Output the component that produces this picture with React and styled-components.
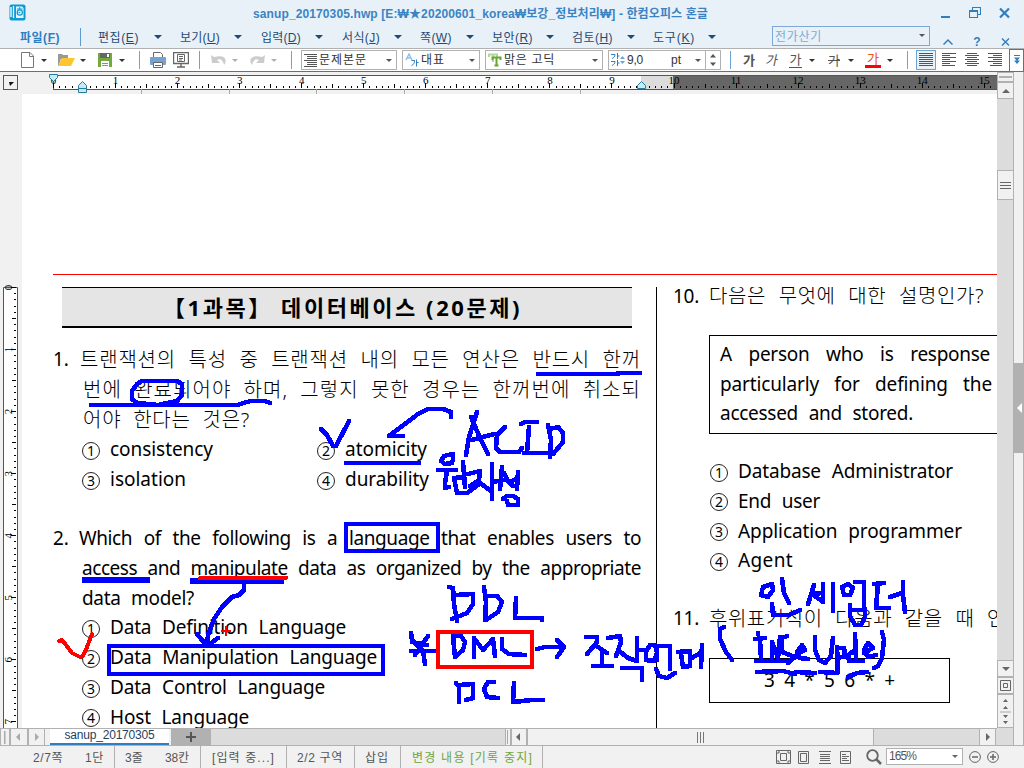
import React, { useLayoutEffect, useRef, useState } from 'react';
import styled, { createGlobalStyle, css } from 'styled-components';

const UI = `"Liberation Sans", "Noto Sans CJK KR", sans-serif`;
const DOC = `"Noto Sans", "Noto Sans CJK KR", sans-serif`;

const Global = createGlobalStyle`
  * { box-sizing: border-box; }
  body { margin: 0; background: #f1f1f1; overflow: hidden; }
  svg { display: block; flex: none; }
`;

const Window = styled.div`
  position: relative;
  width: 1024px;
  height: 768px;
  display: flex;
  flex-direction: column;
  overflow: hidden;
  background: #f1f1f1;
  font-family: ${UI};
  font-size: 12px;
  color: #444;
`;

/* ---------- text fitted to a measured width ---------- */
const FitBox = styled.span`
  display: block;
  flex: none;
  white-space: pre;
  width: ${(p) => p.$w}px;
  margin-left: ${(p) => p.$ml || 0}px;
  word-spacing: ${(p) => p.$ws || 0}px;
`;
const FitInner = styled.span`
  display: inline-block;
`;
function Fit({ w, ml, ws, children }) {
  const ref = useRef(null);
  const [spacing, setSpacing] = useState(0);
  useLayoutEffect(() => {
    const el = ref.current;
    const n = el.textContent.length;
    setSpacing((w - el.getBoundingClientRect().width) / Math.max(1, n));
  }, []);
  return (
    <FitBox $w={w} $ml={ml} $ws={ws}>
      <FitInner ref={ref} style={{ letterSpacing: spacing }}>{children}</FitInner>
    </FitBox>
  );
}

/* ---------- title + menu ---------- */
const Head = styled.header`
  height: 49px;
  flex: none;
  display: flex;
  flex-direction: column;
  background: #e9f1f8;
  border-bottom: 1px solid #b1b1b1;
`;
const TitleBar = styled.div`
  height: 25px;
  display: flex;
  align-items: center;
  padding-left: 9px;
  color: #3a84c4;
  font-weight: bold;
`;
const WindowButtons = styled.div`
  display: flex;
  margin-left: auto;
  margin-right: 14px;
  gap: 18px;
`;
const MenuRow = styled.nav`
  height: 23px;
  display: flex;
  align-items: center;
  padding-left: 20px;
  color: #1f4b73;
`;
const FileMenu = styled.div`
  width: 61px;
  height: 18px;
  display: flex;
  align-items: center;
  font-weight: bold;
  color: #2f7ebf;
  border-right: 1px solid #5f9bd0;
`;
const MenuItem = styled.div`
  width: ${(p) => p.$w}px;
  display: flex;
  align-items: center;
  justify-content: space-between;
`;
const Caret = styled.i`
  display: block;
  flex: none;
  width: 0;
  height: 0;
  border: ${(p) => p.$s || 3}px solid transparent;
  border-top: ${(p) => p.$s || 3}px solid ${(p) => p.$c || '#333'};
  border-bottom: 0;
  margin-left: ${(p) => p.$ml || 0}px;
`;
const SearchBox = styled.div`
  width: 158px;
  height: 20px;
  margin: -2px 15px 0 56px;
  padding: 0 4px 0 2px;
  display: flex;
  align-items: center;
  justify-content: space-between;
  border: 1px solid #7ea9d6;
  color: #7ea9d6;
`;
const SmallButtons = styled.div`
  display: flex;
  gap: 19px;
  align-items: center;
  margin-left: -2px;
  padding-top: 11px;
`;

const menus = [
  ['편집', 'E', 41, 64, 18], ['보기', 'U', 40, 62, 19], ['입력', 'D', 40, 62, 19], ['서식', 'J', 38, 60, 18],
  ['쪽', 'W', 32, 54, 18], ['보안', 'R', 41, 62, 18], ['검토', 'H', 41, 63, 18], ['도구', 'K', 42, 63, 0],
];
const MenuCell = styled(MenuItem)`
  margin-right: ${(p) => p.$gap}px;
`;
const FirstMenu = styled.div`
  display: flex;
  margin-left: 17px;
`;
const QMark = styled.b`
  width: 10px;
  height: 8px;
  line-height: 9px;
  text-align: center;
  font-size: 12px;
  color: #2f7ebf;
`;

function TopBar() {
  return (
    <Head>
      <TitleBar>
        <svg width="17" height="17" viewBox="0 0 17 17">
          <rect x=".5" y=".5" width="16" height="16" rx="2" fill="#0b9bd3" />
          <path d="M2 3v10M4.500 2v12" stroke="#fff" strokeWidth="1.3" />
          <path d="M7 2.500h6l1.500 1.500v10H7z" fill="#e6f6fc" />
          <circle cx="10.800" cy="8.500" r="2.600" fill="none" stroke="#0b9bd3" strokeWidth="1.200" />
          <path d="M8 5h5.500M10.700 3.200V5M9.500 8.800l1.800-.6" stroke="#0b9bd3" strokeWidth="1.200" />
        </svg>
        <Fit w={455} ml={227}>sanup_20170305.hwp [E:₩★20200601_korea₩보강_정보처리₩] - 한컴오피스 혼글</Fit>
        <WindowButtons>
          <svg width="11" height="12"><path d="M1 10h9" stroke="#2f7ebf" strokeWidth="2" /></svg>
          <svg width="12" height="12"><path d="M3.500 3V.5h8v7H9M.5 3.500h8v7h-8zM.5 4.500h8" fill="none" stroke="#2f7ebf" strokeWidth="1.100" /></svg>
          <svg width="11" height="12"><path d="M1 1.500l9 9M10 1.500l-9 9" stroke="#2f7ebf" strokeWidth="2.200" /></svg>
        </WindowButtons>
      </TitleBar>
      <MenuRow>
        <FileMenu><Fit w={40}>파일(<u>F</u>)</Fit></FileMenu>
        <FirstMenu>
          {menus.map(([t, k, w, total, gap]) => (
            <MenuCell key={t} $w={total} $gap={gap}>
              <Fit w={w}>{t}(<u>{k}</u>)</Fit>
              <Caret $s={4} $c="#1f4b73" />
            </MenuCell>
          ))}
        </FirstMenu>
        <SearchBox><Fit w={47}>전가산기</Fit><Caret $c="#555" /></SearchBox>
        <SmallButtons>
          <svg width="10" height="8"><path d="M.5 6.500L5 2l4.500 4.500" fill="none" stroke="#2f7ebf" strokeWidth="1.500" /></svg>
          <QMark>?</QMark>
          <svg width="9" height="8"><path d="M1 .5l7 7M8 .5l-7 7" stroke="#2f7ebf" strokeWidth="1.400" /></svg>
        </SmallButtons>
      </MenuRow>
    </Head>
  );
}

/* ---------- toolbar ---------- */
const Toolbar = styled.div`
  height: 23px;
  flex: none;
  display: flex;
  align-items: center;
  background: #fff;
  border-bottom: 1px solid #2f7ebf;
  color: #333;
`;
const Slot = styled.div`
  width: ${(p) => p.$w}px;
  flex: none;
  display: flex;
  align-items: center;
`;
const Rule = styled.i`
  width: 1px;
  height: 18px;
  flex: none;
  background: #6ba3d3;
`;
const Combo = styled.div`
  width: ${(p) => p.$w}px;
  height: 20px;
  flex: none;
  margin-left: ${(p) => p.$ml || 0}px;
  display: flex;
  align-items: center;
  gap: 2px;
  padding: 0 4px 0 2px;
  border: 1px solid #b1b1b1;
  line-height: 16px;
  & > ${Caret} { margin-left: auto; }
`;
const Spinner = styled.div`
  width: 15px;
  height: 20px;
  flex: none;
  display: flex;
  align-items: center;
  justify-content: center;
  border: 1px solid #b1b1b1;
  border-left: 0;
`;
const Glyph = styled.span`
  width: ${(p) => p.$w}px;
  flex: none;
  text-align: center;
  font-size: 13px;
  line-height: 15px;
  color: ${(p) => p.$c || '#555'};
  ${(p) => p.$bold && css`font-weight: bold;`}
  ${(p) => p.$italic && css`display: inline-block; transform: skewX(-12deg);`}
  ${(p) => p.$under && css`border-bottom: 1px solid #555;`}
  ${(p) => p.$strike && css`text-decoration: line-through;`}
  ${(p) => p.$red && css`line-height: 13px; border-bottom: 3px solid #f00;`}
`;
const AlignButton = styled.div`
  width: 20px;
  height: 20px;
  flex: none;
  margin-right: 3px;
  display: flex;
  align-items: center;
  justify-content: center;
  border: 1px solid ${(p) => (p.$on ? '#6ba3d3' : 'transparent')};
  background: ${(p) => (p.$on ? '#e9f1f8' : 'transparent')};
`;
const MoreButton = styled.div`
  width: 15px;
  height: 23px;
  flex: none;
  margin-left: auto;
  display: flex;
  align-items: center;
  justify-content: center;
  border: 1px solid #2f7ebf;
`;

function AlignIcon({ d }) {
  return <svg width="14" height="14"><path d={d} stroke="#555" fill="none" shapeRendering="crispEdges" /></svg>;
}
const rowsOf = (a) => a.map(([x, w], i) => `M${x} ${0.5 + i * 2}h${w}`).join('');
const J = rowsOf([[0, 14], [0, 14], [0, 14], [0, 14], [0, 14], [0, 14], [0, 14]]);
const L = rowsOf([[0, 14], [0, 8], [0, 14], [0, 8], [0, 14], [0, 8], [0, 13]]);
const C = rowsOf([[2, 10], [0, 14], [2, 10], [0, 14], [2, 10], [0, 14], [2, 10]]);
const R = rowsOf([[0, 14], [5, 9], [0, 14], [5, 9], [0, 14], [5, 9], [2, 12]]);

function Tools() {
  return (
    <Toolbar>
      <IconGroup />
      <Rule />
      <Slot $w={9} />
      <Combo $w={96}>
        <svg width="13" height="14"><path d="M0 1.500h13M3 3.500h10M3 5.500h10M0 7.500h13M3 9.500h10M3 11.500h10M0 13.500h13" stroke="#555" shapeRendering="crispEdges" /></svg>
        <Fit w={48}>문제본문</Fit><Caret $c="#555" />
      </Combo>
      <Combo $w={78} $ml={5}>
        <svg width="14" height="14"><path d="M1 7l3-6 3 6M2 5h4" fill="none" stroke="#8fc0e6" strokeWidth="1.400" /><path d="M6.500 7.500h3c0 3-1 4-3 5M11.500 6.500v7M11.500 9.500h2" fill="none" stroke="#2f7ebf" /></svg>
        <Fit w={24}>대표</Fit><Caret $c="#555" />
      </Combo>
      <Combo $w={118} $ml={5}>
        <svg width="14" height="14"><path d="M1 4V1.500h8V4M5 2v7" fill="none" stroke="#b5d69b" strokeWidth="2" /><path d="M4.500 7V4.500h8V7M8.500 5v8M6.500 12.500h4" fill="none" stroke="#6aa533" strokeWidth="2" /></svg>
        <Fit w={51}>맑은 고딕</Fit><Caret $c="#555" />
      </Combo>
      <Combo $w={98} $ml={5}>
        <svg width="14" height="14"><path d="M0 1.500h4c0 2-1 3-3 4M6.500 0v6M6.500 3h2M0 8.500h4c0 2-1 3-3 4M6.500 7v6M6.500 10h2" fill="none" stroke="#2f7ebf" /><path d="M9 6l2.500-3L14 6zM9 8l2.500 3L14 8z" fill="#6ba3d3" /></svg>
        <Fit w={16}>9,0</Fit><Fit w={10} ml={26}>pt</Fit><Caret $c="#555" />
      </Combo>
      <Spinner><svg width="6" height="14"><path d="M0 4.500L3 1l3 3.500zM0 9.500L3 13l3-3.500z" fill="#555" /></svg></Spinner>
      <Slot $w={9} />
      <Rule />
      <Slot $w={11} />
      <Slot $w={23}><Glyph $w={14} $bold>가</Glyph></Slot>
      <Slot $w={24}><Glyph $w={14} $italic>가</Glyph></Slot>
      <Slot $w={38}><Glyph $w={13} $under>가</Glyph><Caret $ml={7} /></Slot>
      <Slot $w={38}><Glyph $w={14} $strike>가</Glyph><Caret $ml={7} /></Slot>
      <Slot $w={42}><Glyph $w={16} $red $c="#e8501f">가</Glyph><Caret $ml={6} /></Slot>
      <Rule />
      <Slot $w={8} />
      <AlignButton $on><AlignIcon d={J} /></AlignButton>
      <AlignButton><AlignIcon d={L} /></AlignButton>
      <AlignButton><AlignIcon d={C} /></AlignButton>
      <AlignButton><AlignIcon d={R} /></AlignButton>
      <MoreButton><svg width="6" height="10"><path d="M0 5.500L3 9l3-3.500zM0 2.500L3 6l3-3.500z" fill="#2f7ebf" /><path d="M0 .5h6" stroke="#2f7ebf" /></svg></MoreButton>
    </Toolbar>
  );
}
const IconStrip = styled.div`
  display: flex;
  align-items: center;
  width: 270px;
  margin-left: 21px;
  flex: none;
`;
function IconGroup() {
  return (
    <IconStrip>
      <Slot $w={37}>
        <svg width="13" height="16"><path d="M.5.5H9l3.500 3.500v11.500H.5zM8.500.5v4h4" fill="#fff" stroke="#777" /></svg>
        <Caret $ml={7} />
      </Slot>
      <Slot $w={40}>
        <svg width="17" height="14"><path d="M0 1h4l1 1h5v4H3l-2.500 7H0z" fill="#999" /><path d="M4 5h13l-4 8H0z" fill="#fdc52f" /></svg>
        <Caret $ml={5} />
      </Slot>
      <Slot $w={41}>
        <svg width="14" height="14"><path d="M0 0h14v14H0z" fill="#74a940" /><path d="M2 0h10v5H2z" fill="#666" /><path d="M9 1h2v3H9zM3 8h8v6H3z" fill="#fff" /><path d="M4 10.500h6M4 12.500h6" stroke="#74a940" /></svg>
        <Caret $ml={7} />
      </Slot>
      <Rule />
      <Slot $w={10} />
      <Slot $w={23}>
        <svg width="16" height="16"><path d="M3.500 5V.5h7l2 2V5" fill="#fff" stroke="#666" /><rect y="5" width="16" height="8" rx="1" fill="#77a1cf" /><path d="M3.500 10.500h9v5h-9zM5 13.500h6" fill="#fff" stroke="#666" /></svg>
      </Slot>
      <Slot $w={26}>
        <svg width="16" height="16"><path d="M.5.500h15v11H.5zM4 15h8M8 12v3" fill="none" stroke="#666" strokeWidth="1.400" /><path d="M4.500 2.500h7v7h-7zM6 4.500h4M6 6.500h4M6 8h3" fill="#fff" stroke="#666" /></svg>
      </Slot>
      <Rule />
      <Slot $w={11} />
      <Slot $w={38}>
        <svg width="16" height="12"><path d="M0 1l1 8h8L6 6c4-2 6 1 7 5 4-5 1-11-10-8z" fill="#ccc" /></svg>
        <Caret $c="#b0b0b0" $ml={5} />
      </Slot>
      <Slot $w={41}>
        <svg width="16" height="12"><path d="M16 1l-1 8H7l3-3C6 4 4 7 3 11-1 6 2 0 13 3z" fill="#ccc" /></svg>
        <Caret $c="#b0b0b0" $ml={6} />
      </Slot>
    </IconStrip>
  );
}

/* ---------- rulers ---------- */
const RulerRow = styled.div`
  height: 22px;
  flex: none;
  display: flex;
`;
const UNIT = 62.05;
function TopRuler() {
  const ticks = [];
  for (let i = 0; i <= 151; i++) {
    const x = Math.round(53 + i * UNIT / 10) + 0.5;
    ticks.push(`M${x} ${i % 10 === 0 ? 11 : i % 5 === 0 ? 12 : 14}V16`);
  }
  return (
    <svg width="997" height="22">
      <path d="M53 3h588v14H53z" fill="#fff" />
      <path d="M641 3h32v14h-32z" fill="#dcdcdc" />
      <path d="M673 3h324v15H673z" fill="#666" />
      <path d="M53 3.500h944M53 17.500h944M53.500 3v15" stroke="#555" fill="none" />
      <path d={ticks.join('')} stroke="#000" shapeRendering="crispEdges" />
      <path d="M141.500 17v5M229.500 17v5M316.500 17v5M404.500 17v5M492.500 17v5M580.500 17v5" stroke="#aaa" />
      <g fontFamily="Liberation Serif, serif" fontSize="11" textAnchor="middle">
        {Array.from({ length: 16 }, (_, i) => <text key={i} x={53.5 + i * UNIT} y="12">{i}</text>)}
      </g>
      <g stroke="#2b7a9c" fill="#c2edf8">
        <path d="M49.500 2.500h8v3l-4 4-4-4z" />
        <path d="M82.500 9.500l4 4v7h-8v-7zM78.500 16.500h8" />
        <path d="M641.500 9.500l4 4v3h-8v-3z" />
      </g>
      <rect x="3.500" y="3.500" width="14" height="14" fill="#f1f1f1" stroke="#555" />
      <path d="M9 10h5l-4 4z" fill="#111" />
    </svg>
  );
}
function SideRuler() {
  const ticks = [];
  for (let i = 0; i <= 71; i++) {
    const y = Math.round(193 + i * UNIT / 10) + 0.5;
    ticks.push(`M${i % 10 === 0 ? 11 : i % 5 === 0 ? 12 : 14} ${y}H16`);
  }
  return (
    <svg width="22" height="634">
      <path d="M4 193h13v441H4z" fill="#fff" />
      <path d="M3.500 634V193.500h14V634" fill="none" stroke="#555" />
      <path d={ticks.join('')} stroke="#000" shapeRendering="crispEdges" />
      <g fontFamily="Liberation Serif, serif" fontSize="11" textAnchor="middle">
        {Array.from({ length: 8 }, (_, i) => (
          <text key={i} transform={`translate(12 ${193.5 + i * UNIT}) rotate(-90)`}>{i}</text>
        ))}
      </g>
    </svg>
  );
}

/* ---------- document ---------- */
const Body = styled.div`
  flex: 1;
  display: flex;
  min-height: 0;
`;
const Editor = styled.div`
  width: 997px;
  flex: none;
  display: flex;
  flex-direction: column;
`;
const Work = styled.div`
  height: 634px;
  flex: none;
  display: flex;
`;
const Page = styled.main`
  width: 975px;
  padding: 180px 0 0 31px;
  background: #fff;
  overflow: hidden;
  color: #000;
  font-family: ${DOC};
  font-size: 19px;
`;
const Columns = styled.div`
  display: flex;
  height: 454px;
  padding-top: 12px;
  border-top: 1px solid #f00;
`;
const LeftColumn = styled.section`
  width: 604px;
  flex: none;
  border-right: 1px solid #000;
`;
const RightColumn = styled.section`
  width: 340px;
  flex: none;
  overflow: hidden;
  padding-left: 16px;
`;
const SubjectBar = styled.h1`
  width: 570px;
  height: 41px;
  margin: 0 0 17px 9px;
  display: flex;
  align-items: center;
  padding-bottom: 3px;
  background: #e5e5e5;
  border-top: 1px solid #000;
  border-bottom: 2px solid #000;
  font-size: 22px;
`;
const Line = styled.div`
  height: ${(p) => p.$h || 29.83}px;
  line-height: ${(p) => p.$h || 29.83}px;
  display: flex;
  padding-left: ${(p) => p.$in || 0}px;
  padding-top: ${(p) => p.$drop || 0}px;
  font-size: ${(p) => (p.$ko ? 20 : 19)}px;
  font-weight: ${(p) => (p.$ko ? 300 : 400)};
  color: #000;
`;
const Num = styled.span`
  width: ${(p) => p.$w}px;
  flex: none;
  font-size: 19px;
  font-weight: 400;
`;
const Circle = styled.span`
  width: 18px;
  height: 18px;
  flex: none;
  margin: 6.500px 10px 0 0;
  border: 1px solid #222;
  border-radius: 50%;
  font-size: 14px;
  line-height: 16px;
  text-align: center;
`;
const Choice = styled.div`
  width: ${(p) => p.$w || 'auto'};
  display: flex;
`;
const Frame = styled.div`
  width: ${(p) => p.$w}px;
  height: ${(p) => p.$h}px;
  margin: ${(p) => p.$m};
  padding: ${(p) => p.$p};
  border: 1px solid #000;
`;
const Blank = styled.div`
  height: ${(p) => p.$h}px;
`;

function Option({ n, w, col, children }) {
  return <Choice $w={col}><Circle>{n}</Circle><Fit w={w} ws={6}>{children}</Fit></Choice>;
}

function DocumentPage() {
  return (
    <Page>
      <Columns>
        <LeftColumn>
          <SubjectBar><Fit w={359} ml={101} ws={0}>【1과목】 데이터베이스 (20문제)</Fit></SubjectBar>
          <Line $ko><Num $w={27}>1.</Num><Fit w={561} ws={6.5}>트랜잭션의 특성 중 트랜잭션 내의 모든 연산은 반드시 한꺼</Fit></Line>
          <Line $ko $in={30}><Fit w={558} ws={6}>번에 완료되어야 하며, 그렇지 못한 경우는 한꺼번에 취소되</Fit></Line>
          <Line $ko $in={30}><Fit w={167} ws={6}>어야 한다는 것은?</Fit></Line>
          <Line $in={29} $drop={1}><Option n="1" w={103} col="235px">consistency</Option><Option n="2" w={82}>atomicity</Option></Line>
          <Line $in={29} $drop={1}><Option n="3" w={76} col="235px">isolation</Option><Option n="4" w={84}>durability</Option></Line>
          <Blank $h={29.83} />
          <Line><Num $w={26}>2.</Num><Fit w={562} ws={7}>Which of the following is a language that enables users to</Fit></Line>
          <Line $in={29}><Fit w={559} ws={5.8}>access and manipulate data as organized by the appropriate</Fit></Line>
          <Line $in={29}><Fit w={112} ws={5.8}>data model?</Fit></Line>
          <Line $in={29}><Option n="1" w={236}>Data Definition Language</Option></Line>
          <Line $in={29}><Option n="2" w={267}>Data Manipulation Language</Option></Line>
          <Line $in={29}><Option n="3" w={215}>Data Control Language</Option></Line>
          <Line $in={29}><Option n="4" w={139}>Host Language</Option></Line>
        </LeftColumn>
        <RightColumn>
          <Line $ko $h={18}><Num $w={36}><Fit w={26}>10.</Fit></Num><Fit w={275} ws={7}>다음은 무엇에 대한 설명인가?</Fit></Line>
          <Frame $w={310} $h={99} $m="30px 0 23px 36px" $p="4px 0 0 10px">
            <Line $h={29.6}><Fit w={270} ws={12}>A person who is response</Fit></Line>
            <Line $h={29.6}><Fit w={272} ws={10.500}>particularly for defining the</Fit></Line>
            <Line $h={29.6}><Fit w={193} ws={6}>accessed and stored.</Fit></Line>
          </Frame>
          <Line $in={37}><Option n="1" w={215}>Database Administrator</Option></Line>
          <Line $in={37}><Option n="2" w={82}>End user</Option></Line>
          <Line $in={37}><Option n="3" w={224}>Application programmer</Option></Line>
          <Line $in={37}><Option n="4" w={55}>Agent</Option></Line>
          <Blank $h={28} />
          <Line $ko><Num $w={36}><Fit w={26}>11.</Fit></Num><Fit w={297} ws={7}>후위표기식이 다음과 같을 때 연</Fit></Line>
          <Frame $w={241} $h={45} $m="24px 0 0 36px" $p="7px 0 0 54px">
            <Line><Fit w={131} ws={4.500}>3 4 * 5 6 * +</Fit></Line>
          </Frame>
        </RightColumn>
      </Columns>
    </Page>
  );
}

/* ---------- bottom tabs and horizontal scroll ---------- */
const TabRow = styled.div`
  height: 18px;
  flex: none;
  display: flex;
  background: #dcdcdc;
  border-top: 1px solid #b1b1b1;
  border-bottom: 1px solid #b1b1b1;
`;
const Box = styled.div`
  width: ${(p) => p.$w}px;
  height: ${(p) => (p.$h ? p.$h + 'px' : 'auto')};
  flex: none;
  margin-left: ${(p) => p.$ml || 0}px;
  display: flex;
  align-items: center;
  justify-content: center;
  background: ${(p) => p.$bg || '#f1f1f1'};
  border: solid #b1b1b1;
  border-width: ${(p) => p.$b || '0 1px'};
`;
const FileTab = styled.div`
  width: 119px;
  flex: none;
  display: flex;
  justify-content: center;
  line-height: 12px;
  background: #fff;
  border-bottom: 2px solid #2f7ebf;
  color: #1f3f60;
`;

function Tri({ d, c = '#666' }) {
  const paths = { left: 'M5 0v8L1 4z', right: 'M2 0v8l4-4z', up: 'M0 6h8L4 2z', down: 'M0 2h8L4 6z' };
  return <svg width="8" height="8"><path d={paths[d]} fill={c} /></svg>;
}

function Tabs() {
  return (
    <TabRow>
      <Box $w={10}><svg width="3" height="13"><path d="M.500 0v13" stroke="#aaa" strokeWidth="2" /></svg></Box>
      <Box $w={18}><Tri d="left" c="#aaa" /></Box>
      <Box $w={17}><Tri d="right" c="#aaa" /></Box>
      <Box $w={5} $b="0" />
      <FileTab><Fit w={90}>sanup_20170305</Fit></FileTab>
      <Box $w={2} $b="0" />
      <Box $w={40} $b="0" $bg="#b1b1b1"><svg width="10" height="10"><path d="M5 0v10M0 5h10" stroke="#555" strokeWidth="2" /></svg></Box>
      <Box $w={6} $ml={294}><svg width="2" height="14"><path d="M.500 0v14" stroke="#aaa" /></svg></Box>
      <Box $w={16}><Tri d="left" /></Box>
      <Box $w={347}><svg width="8" height="11"><path d="M.500 0v11M3.500 0v11M6.500 0v11" stroke="#777" /></svg></Box>
      <Box $w={17} $ml={105}><Tri d="right" /></Box>
    </TabRow>
  );
}

/* ---------- vertical scroll ---------- */
const ScrollColumn = styled.div`
  width: 17px;
  flex: none;
  display: flex;
  flex-direction: column;
  background: #dcdcdc;
  border-right: 1px solid #b1b1b1;
  border-bottom: 1px solid #b1b1b1;
`;
const ScrollGap = styled.div`
  height: ${(p) => p.$h}px;
  flex: none;
`;
const Dock = styled.div`
  width: 10px;
  flex: none;
  padding-top: 291px;
  border-right: 1px solid #b1b1b1;
  border-bottom: 1px solid #b1b1b1;
`;
const DockHandle = styled.div`
  height: 90px;
  display: flex;
  align-items: center;
  justify-content: flex-end;
  background: #b1b1b1;
`;

function VScroll() {
  return (
    <ScrollColumn>
      <Box $w={17} $h={10} $b="1px"><svg width="13" height="2"><path d="M0 1h13" stroke="#b1b1b1" strokeWidth="2" /></svg></Box>
      <Box $w={17} $h={17} $b="1px"><Tri d="up" /></Box>
      <ScrollGap $h={71} />
      <Box $w={17} $h={30} $b="1px"><svg width="11" height="8"><path d="M0 1.500h11M0 4.500h11M0 7.500h11" stroke="#666" /></svg></Box>
      <ScrollGap $h={460} />
      <Box $w={17} $h={17} $b="1px"><Tri d="down" /></Box>
      <Box $w={17} $h={17} $b="1px"><svg width="11" height="11"><path d="M.500.500h10v10H.500zM3.500 3.500h4v4h-4z" fill="none" stroke="#666" /></svg></Box>
      <Box $w={17} $h={34} $b="1px"><svg width="11" height="30"><path d="M3 6l2.500-3L8 6zM3 13l2.500-3L8 13zM3 19l2.500 3L8 19zM3 25l2.500 3L8 25z" fill="#666" /><path d="M0 16h11" stroke="#aaa" /></svg></Box>
    </ScrollColumn>
  );
}

/* ---------- status ---------- */
const Status = styled.footer`
  height: 22px;
  flex: none;
  display: flex;
  align-items: center;
  background: #f1f1f1;
  color: #555;
`;
const Cell = styled.div`
  width: ${(p) => p.$w}px;
  height: 22px;
  flex: none;
  display: flex;
  align-items: center;
  padding-left: ${(p) => p.$pl}px;
  padding-bottom: 2px;
  border-right: 1px solid #b1b1b1;
  color: ${(p) => p.$c || 'inherit'};
`;
const ViewIcons = styled.div`
  margin-left: 233px;
  display: flex;
  align-items: center;
  width: 110px;
  flex: none;
`;
const Zoom = styled.div`
  width: 77px;
  height: 17px;
  margin-top: -2px;
  flex: none;
  display: flex;
  align-items: center;
  justify-content: space-between;
  padding: 0 4px 0 2px;
  background: #fff;
  border: 1px solid #b1b1b1;
`;
const ZoomValue = styled.div`
  display: flex;
  line-height: 14px;
`;
const ZoomButtons = styled.div`
  display: flex;
  gap: 6px;
  margin-left: 6px;
`;

function StatusBar() {
  return (
    <Status>
      <Cell $w={115} $pl={33}><Fit w={30}>2/7쪽</Fit><Fit w={19} ml={22}>1단</Fit></Cell>
      <Cell $w={86} $pl={10}><Fit w={18}>3줄</Fit><Fit w={24} ml={22}>38칸</Fit></Cell>
      <Cell $w={86} $pl={11}><Fit w={63}>[입력 중...]</Fit></Cell>
      <Cell $w={68} $pl={10}><Fit w={46}>2/2 구역</Fit></Cell>
      <Cell $w={46} $pl={10}><Fit w={24}>삽입</Fit></Cell>
      <Cell $w={142} $pl={11} $c="#6fa53c"><Fit w={121}>변경 내용 [기록 중지]</Fit></Cell>
      <ViewIcons>
        <Slot $w={22}><svg width="15" height="14"><path d="M.500.500h14v13H.500zM4.500 3.500h6v7h-6z" fill="none" stroke="#666" /><path d="M2 4V2h2M11 2h2v2M13 10v2h-2M4 12H2v-2" fill="none" stroke="#666" /></svg></Slot>
        <Slot $w={21}><svg width="11" height="13"><path d="M.500.500h10v12H.500zM2.500 2.500h6v8h-6z" fill="none" stroke="#666" /></svg></Slot>
        <Slot $w={21}><svg width="12" height="13"><path d="M0 .500h12M1 3.500h10M1 5.500h10M1 7.500h10M1 9.500h10M0 12.500h12" stroke="#666" /></svg></Slot>
        <Slot $w={26}><svg width="11" height="13"><path d="M.500.500h10v12H.500zM2 3.500h4M2 5.500h7M2 7.500h5M2 9.500h7" fill="none" stroke="#666" /></svg></Slot>
        <Slot $w={20}><svg width="16" height="16"><circle cx="6.500" cy="6.500" r="5.300" fill="none" stroke="#666" strokeWidth="1.800" /><path d="M10.500 10.500l4.500 4.500" stroke="#666" strokeWidth="2.500" /></svg></Slot>
      </ViewIcons>
      <Zoom><ZoomValue><Fit w={27}>165%</Fit></ZoomValue><Caret $c="#666" /></Zoom>
      <ZoomButtons>
        <svg width="12" height="12"><circle cx="6" cy="6" r="5.400" fill="none" stroke="#666" /><path d="M3 6h6" stroke="#666" strokeWidth="1.500" /></svg>
        <svg width="12" height="12"><circle cx="6" cy="6" r="5.400" fill="none" stroke="#666" /><path d="M3 6h6M6 3v6" stroke="#666" strokeWidth="1.500" /></svg>
      </ZoomButtons>
    </Status>
  );
}

/* ---------- pen annotations drawn over the page ---------- */
const Ink = styled.svg`
  position: absolute;
  left: 0;
  top: 0;
  pointer-events: none;
`;
const strokes = [
  // question 1
  'M538 374H618V373H640', 'M91 405H238L243 403L251 401H265L270 403',
  'M142 381H177L182 384V395L177 401L158 405L137 403L132 399V391L137 384Z',
  'M321 429L327 435L333 446H336L349 421', 'M451 417V412L443 409H428L418 414L389 436H403',
  // ACID
  'M477 412L475 418L469 437L466 455', 'M471 417L480 438L488 454M472 440L494 434',
  'M505 427L497 435L496 448L500 452H519L522 448', 'M521 424L525 422H537M529 427L527 453M524 453H552',
  'M548 425L551 440L550 457M550 429L558 427L563 433V442L553 454',
  // 원자성
  'M452 454L444 456L441 461L445 464L452 463L453 459V454Z', 'M438 470H456M447 471L445 483V488L449 487',
  'M463 462L465 487M454 478L464 477M454 478L457 493H467L478 485', 'M468 474L480 471L479 480L470 486M480 483L491 491',
  'M492 464V499M492 482L504 480', 'M502 467L500 489M504 473L508 481L513 486', 'M518 472L517 489M510 482L518 478',
  'M503 499L507 496L513 496L518 499V505H508L507 501',
  // arrow to choice 2
  'M244 584V590L239 595L232 597L222 607L214 619L208 635L207 646M197 634L207 646L218 638',
  // DDL / DML / DCL
  'M449 587L453 588L454 604L457 621M455 595L473 594V604L467 613L452 619',
  'M484 587L486 602L485 620M486 596L497 596L502 602L498 612L486 620', 'M516 598L515 618H542V620',
  'M453 636L455 657M453 636H461L465 642L463 650L455 657', 'M474 657V638L483 650L493 639L495 656', 'M502 639V649L509 654L525 655',
  'M456 683L459 687V702M460 685L473 684V698L466 700', 'M494 682H488L484 689L487 697L498 698', 'M514 683L513 702L532 700H543',
  'M411 633L412 640L423 651L425 664M428 636L415 655M411 651H438M412 642L427 645',
  'M537 649L545 647H563M557 640L564 647L557 657',
  // 조작언어
  'M586 637H597L597 642L587 654M595 645L607 653', 'M602 653V665M593 666H612',
  'M608 638L620 636L621 642L616 656M618 650L628 658L637 661', 'M637 638V661M637 650H645', 'M622 668H642V680',
  'M650 645L646 652V660L654 661L657 653L655 645ZM657 646V660M657 646H670V669', 'M656 669L659 676L667 678L675 673',
  'M678 652L690 651V666L683 667L681 654M702 645L701 667M690 659L702 652',
  // 인세입터
  'M724 627L720 629V639L726 652L732 660', 'M772 584L763 587L761 595L768 597L773 590ZM782 579L784 593L789 603',
  'M772 604L773 615H789L800 610', 'M814 585L808 604M812 594L822 593M813 595L822 601M823 584V602M833 584V611',
  'M848 584L842 587L844 595H850L853 588ZM855 582H864V607', 'M850 605V616L855 625H861L865 617V609M850 610H864',
  'M874 584L884 583M878 584L876 608H889M903 582V595L905 612M890 597L902 593',
  // Inse Upde
  'M758 633V634M755 639L765 638M760 640L761 659M756 661H787', 'M772 660V642L778 658L780 637',
  'M787 636L782 638V652L795 657L788 663', 'M797 654L805 650L802 645L797 652L800 658L808 659',
  'M815 637V650L819 660L825 663L831 656L833 638', 'M837 647L838 672M838 648H844L845 656L838 658',
  'M855 634L856 660M855 650L848 655L849 661H863', 'M864 653L873 648L868 643L864 650L868 657L876 655',
  'M882 632L884 640L882 658L878 666L874 668', 'M757 672L783 671L795 674M796 672L815 673M820 672L837 673V668M848 677L857 673L867 672',
];

function Annotations() {
  return (
    <Ink width="1024" height="768" viewBox="0 0 1024 768">
      <g fill="none" stroke="#0000fe" strokeWidth="4" shapeRendering="crispEdges">
        <g strokeWidth="4.600" strokeLinecap="round" strokeLinejoin="round">
          {strokes.map((d) => <path key={d} d={d} />)}
        </g>
        <path d="M344 463H421" />
        <path d="M346 524H438V551H346Z M109 646H383V674H109Z" />
        <path d="M82 580H150M190 581H284" strokeWidth="6" />
      </g>
      <g fill="none" stroke="#fe0000" strokeWidth="4" shapeRendering="crispEdges">
        <path d="M438 632H532V667H438Z" />
        <path d="M200 578H286" strokeLinecap="round" />
        <path d="M59 641L62 640L66 645L72 653L80 657L83 656L87 647L92 634" strokeLinecap="round" strokeLinejoin="round" />
        <path d="M226 626V636M221 631H231" strokeWidth="2" />
      </g>
    </Ink>
  );
}

export default function App() {
  return (
    <Window>
      <Global />
      <TopBar />
      <Tools />
      <Body>
        <Editor>
          <RulerRow><TopRuler /></RulerRow>
          <Work><SideRuler /><DocumentPage /></Work>
          <Tabs />
        </Editor>
        <VScroll />
        <Dock><DockHandle><svg width="6" height="10"><path d="M5 0v10L0 5z" fill="#fff" /></svg></DockHandle></Dock>
      </Body>
      <StatusBar />
      <Annotations />
    </Window>
  );
}
